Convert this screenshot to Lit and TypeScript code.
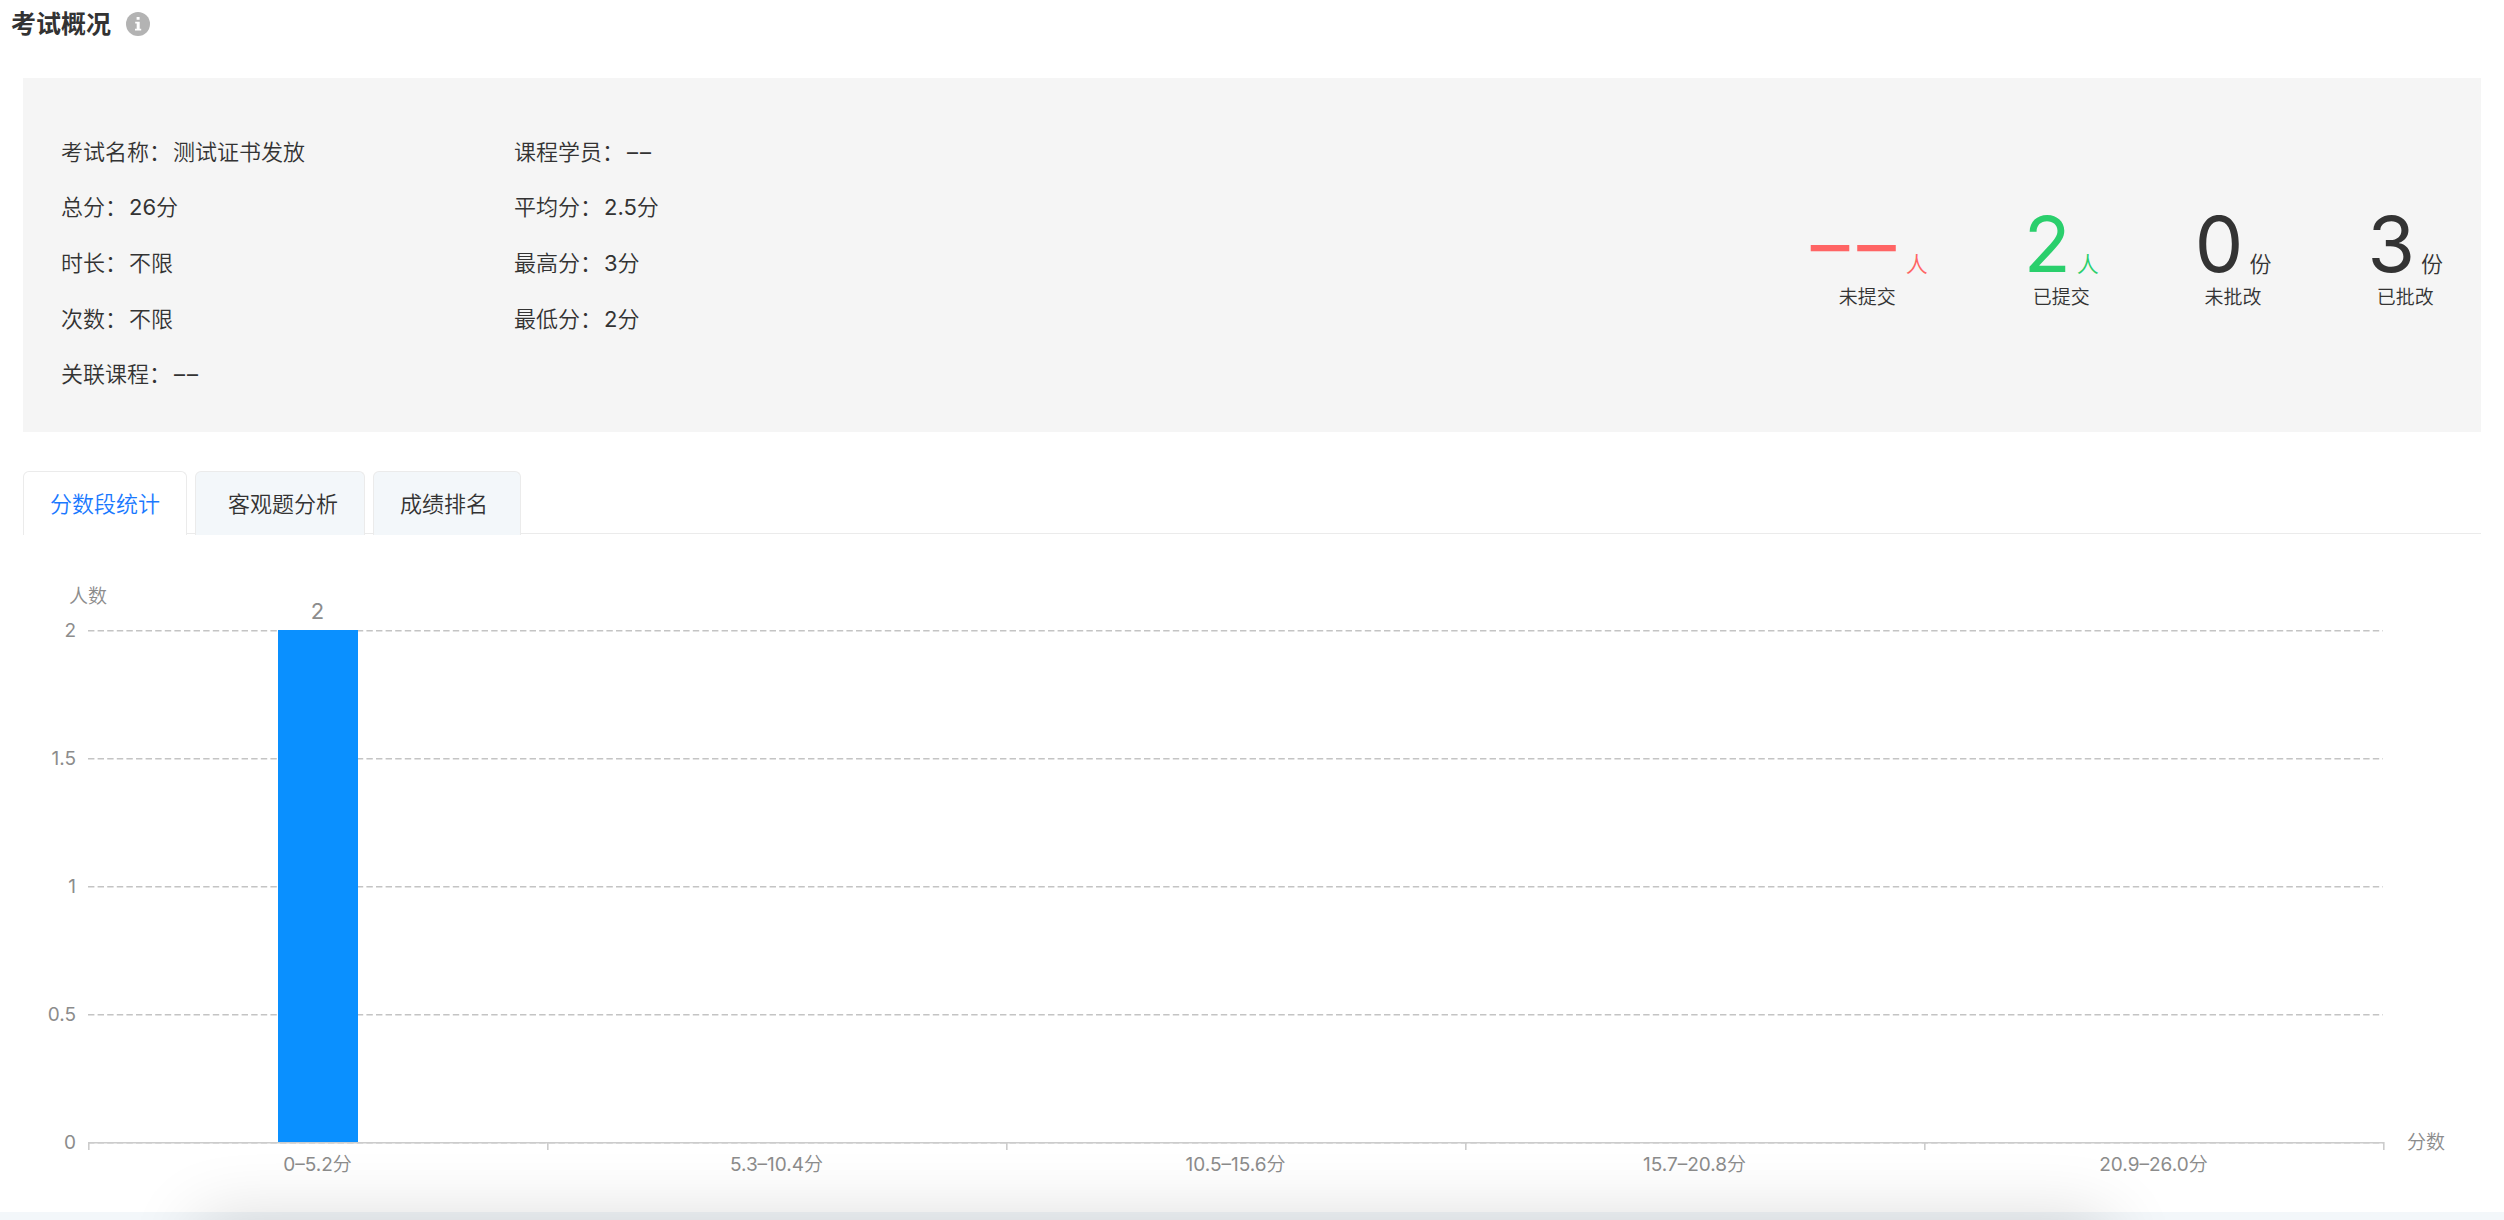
import { LitElement, html, css, svg } from "lit";
import { customElement, property, state } from "lit/decorators.js";
import { classMap } from "lit/directives/class-map.js";
import { styleMap } from "lit/directives/style-map.js";

interface Bin {
  label: string;
  count: number;
}

const EMPTY = "––";

const INFO: string[][][] = [
  [
    ["考试名称", "测试证书发放"],
    ["总分", "26分"],
    ["时长", "不限"],
    ["次数", "不限"],
    ["关联课程", EMPTY],
  ],
  [
    ["课程学员", EMPTY],
    ["平均分", "2.5分"],
    ["最高分", "3分"],
    ["最低分", "2分"],
  ],
];

const STATS = [
  { value: EMPTY, unit: "人", label: "未提交", tone: "red" },
  { value: "2", unit: "人", label: "已提交", tone: "green" },
  { value: "0", unit: "份", label: "未批改", tone: "dark" },
  { value: "3", unit: "份", label: "已批改", tone: "dark" },
];

const TABS = ["分数段统计", "客观题分析", "成绩排名"];

const BINS: Bin[] = [
  { label: "0–5.2分", count: 2 },
  { label: "5.3–10.4分", count: 0 },
  { label: "10.5–15.6分", count: 0 },
  { label: "15.7–20.8分", count: 0 },
  { label: "20.9–26.0分", count: 0 },
];

/** A missing value is drawn as two separate dashes. */
const show = (value: string) =>
  value === EMPTY ? html`<span class="dashes">${[...value].map((c) => html`<span>${c}</span>`)}</span>` : value;

@customElement("score-chart")
export class ScoreChart extends LitElement {
  static styles = css`
    :host {
      display: grid;
      grid-template-columns: 88px 1fr 121px;
      grid-template-rows: auto 512px auto;
      color: #8c8c8c;
      font-size: 19px;
      line-height: 20px;
    }
    .y-name {
      grid-column: 1 / 3;
      width: 176px;
      padding-bottom: 23px;
      text-align: center;
    }
    .y-labels {
      grid-column: 1;
      grid-row: 2;
      display: flex;
      flex-direction: column;
      justify-content: space-between;
      margin: -9px 0 -11px;
      padding-right: 12px;
      text-align: right;
    }
    .plot {
      grid-column: 2;
      grid-row: 2;
      display: grid;
    }
    .lines,
    .bars {
      grid-area: 1 / 1;
    }
    .lines {
      width: 100%;
      height: 100%;
      overflow: visible;
    }
    .bars,
    .x-labels {
      display: grid;
      grid-template-columns: repeat(5, 1fr);
      justify-items: center;
    }
    .bars {
      align-items: end;
    }
    .bar {
      position: relative;
      width: 80px;
      background: #0a90ff;
    }
    .bar-value {
      position: absolute;
      bottom: 100%;
      left: 0;
      right: 0;
      padding-bottom: 6px;
      font-size: 22px;
      line-height: 26px;
      text-align: center;
    }
    .x-name {
      grid-column: 3;
      grid-row: 2;
      align-self: end;
      margin-bottom: -11px;
      padding-left: 24px;
    }
    .x-labels {
      grid-column: 2;
      grid-row: 3;
      padding-top: 13px;
    }
  `;

  @property({ attribute: false }) bins: Bin[] = [];
  @property({ attribute: false }) ticks: number[] = [2, 1.5, 1, 0.5, 0];

  render() {
    const max = this.ticks[0];
    return html`
      <div class="y-name">人数</div>
      <div class="y-labels">${this.ticks.map((t) => html`<span>${t}</span>`)}</div>
      <div class="plot">
        <svg class="lines" aria-hidden="true">
          ${this.ticks.map((t) => {
            const y = `${(1 - t / max) * 100}%`;
            return svg`<line x1="0" x2="100%" y1=${y} y2=${y} transform="translate(0 0.8)"
              stroke="#c4c4c4" stroke-width="1.6" stroke-dasharray="6.4 3.2" />`;
          })}
          <line x1="0" x2="100%" y1="100%" y2="100%" transform="translate(0 0.8)" stroke="#ccc" stroke-width="1.6" />
          ${Array.from({ length: this.bins.length + 1 }, (_, i) => {
            const x = `${(i / this.bins.length) * 100}%`;
            return svg`<svg x="0" y="100%" width="100%" height="8" overflow="visible">
              <line x1=${x} x2=${x} y1="0" y2="8" stroke="#ccc" stroke-width="1.6" transform="translate(0.8 0)" />
            </svg>`;
          })}
        </svg>
        <div class="bars">
          ${this.bins.map((b) =>
            b.count
              ? html`<div class="bar" style=${styleMap({ height: `${(b.count / max) * 100}%` })}>
                  <span class="bar-value">${b.count}</span>
                </div>`
              : html`<div></div>`
          )}
        </div>
      </div>
      <div class="x-name">分数</div>
      <div class="x-labels">${this.bins.map((b) => html`<span>${b.label}</span>`)}</div>
    `;
  }
}

@customElement("app-root")
export class AppRoot extends LitElement {
  static styles = css`
    :host {
      display: flex;
      flex-direction: column;
      position: relative;
      min-height: 100vh;
      overflow: hidden;
      background: #fff;
      color: #333;
      font-family: Inter, "Noto Sans CJK SC DemiLight", "Noto Sans CJK SC", sans-serif;
      font-size: 22px;
      line-height: 36px;
    }
    .head {
      display: flex;
      align-items: center;
      gap: 15px;
      padding: 6px 11px;
    }
    .title {
      margin: 0;
      font-family: Inter, "Noto Sans CJK SC", sans-serif;
      font-size: 25px;
      line-height: 36px;
      font-weight: 600;
    }
    .info {
      display: flex;
      padding: 0;
      border: 0;
      background: none;
      cursor: pointer;
    }
    .overview {
      display: flex;
      justify-content: space-between;
      align-items: center;
      margin: 30px 23px 0;
      padding: 46px 38px 30px;
      background: #f5f5f5;
    }
    .facts {
      display: flex;
    }
    .column {
      display: grid;
      grid-template-rows: repeat(5, 1fr);
      width: 453px;
      min-height: 278px;
      margin: 0;
    }
    .fact {
      display: flex;
      align-items: center;
      gap: 2px;
    }
    .fact dd {
      margin: 0;
    }
    .dashes {
      display: inline-flex;
      gap: 2px;
      padding: 0 1px;
    }
    .stats {
      display: flex;
      gap: 96px;
    }
    .stat {
      text-align: center;
    }
    .figure {
      display: flex;
      align-items: baseline;
      justify-content: center;
      gap: 6px;
    }
    .number {
      font-size: 77px;
      line-height: 70px;
    }
    .number .dashes {
      gap: 8px;
      padding: 0 4px;
    }
    .unit {
      line-height: 30px;
    }
    .caption {
      font-size: 19px;
      line-height: 38px;
    }
    .red {
      color: #ff6464;
    }
    .green {
      color: #2acf6c;
    }
    .tabs {
      display: flex;
      gap: 8px;
      margin: 39px 23px 0;
      border-bottom: 1px solid #ebebeb;
    }
    .tab {
      height: 64px;
      margin-bottom: -2px;
      padding: 0 26px;
      border: 1px solid #ebebeb;
      border-bottom: 0;
      border-radius: 6px 6px 0 0;
      background: #f3f7fa;
      color: #333;
      font: inherit;
      cursor: pointer;
    }
    .tab:nth-child(2) {
      padding-left: 32px;
    }
    .tab:nth-child(3) {
      padding-right: 32px;
    }
    .tab.active {
      background: #fff;
      color: #1a79ff;
    }
    .chart {
      flex: 1;
      padding: 53px 0 37px;
    }
    .strip {
      height: 8px;
      background: #f3f7fa;
    }
    .shade {
      position: absolute;
      top: 100%;
      left: 198px;
      right: 396px;
      height: 200px;
      box-shadow: 0 0 70px rgba(0, 0, 0, 0.16);
      pointer-events: none;
    }
  `;

  @state() private active = 0;

  render() {
    return html`
      <header class="head">
        <h1 class="title">考试概况</h1>
        <button class="info" aria-label="说明">
          <svg width="24" height="24" viewBox="0 0 24 24">
            <circle cx="12" cy="12" r="12" fill="#b3b3b3" />
            <path d="M10.600 5h3v2.800h-3zM9.200 9.800h4.500v7h1.500V18.400H9v-1.600h1.700v-5.400H9.200z" fill="#fff" />
          </svg>
        </button>
      </header>
      <section class="overview">
        <div class="facts">
          ${INFO.map(
            (col) => html`<dl class="column">
              ${col.map(([k, v]) => html`<div class="fact"><dt>${k}：</dt><dd>${show(v)}</dd></div>`)}
            </dl>`
          )}
        </div>
        <div class="stats">
          ${STATS.map(
            (s) => html`<div class="stat">
              <div class="figure ${s.tone}"><span class="number">${show(s.value)}</span><span class="unit">${s.unit}</span></div>
              <div class="caption">${s.label}</div>
            </div>`
          )}
        </div>
      </section>
      <nav class="tabs" role="tablist">
        ${TABS.map(
          (t, i) => html`<button
            role="tab"
            aria-selected=${i === this.active}
            class=${classMap({ tab: true, active: i === this.active })}
            @click=${() => (this.active = i)}
          >${t}</button>`
        )}
      </nav>
      <main class="chart">
        <score-chart .bins=${BINS}></score-chart>
      </main>
      <div class="strip"></div>
      <div class="shade"></div>
    `;
  }
}
